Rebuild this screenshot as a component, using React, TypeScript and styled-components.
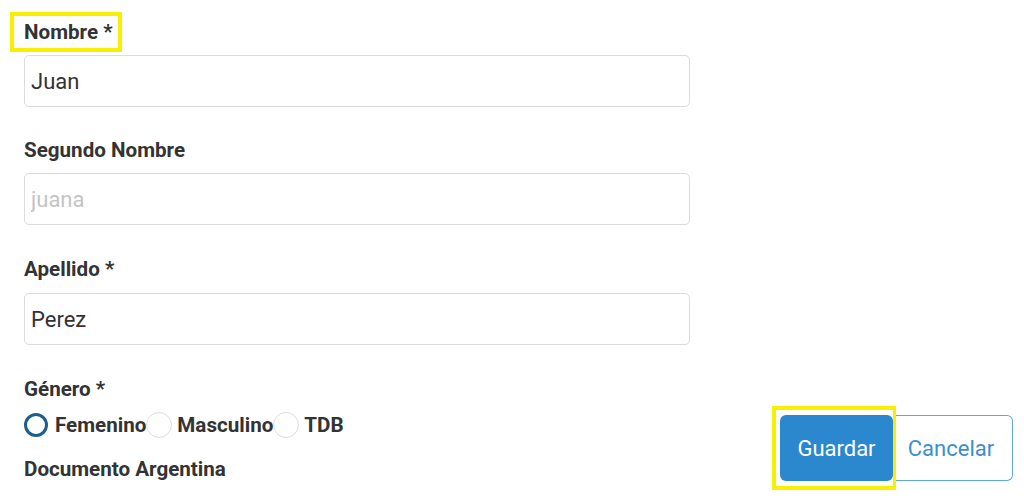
import styled, { createGlobalStyle } from 'styled-components';

const highlight = '#f7f000';
const ink = '#333333';
const blue = '#2b88cf';

const GlobalStyle = createGlobalStyle`
  html, body {
    margin: 0;
    padding: 0;
    background: #ffffff;
    font-family: Roboto, "Noto Sans", "Liberation Sans", sans-serif;
    color: ${ink};
  }
`;

const fields = [
  { label: 'Nombre *', value: 'Juan', placeholder: '', marked: true },
  { label: 'Segundo Nombre', value: '', placeholder: 'juana', marked: false },
  { label: 'Apellido *', value: 'Perez', placeholder: '', marked: false },
];

const genders = ['Femenino', 'Masculino', 'TDB'];

export default function App() {
  return (
    <>
      <GlobalStyle />
      <Form>
        {fields.map((f) => (
          <Field key={f.label}>
            <Label $marked={f.marked}>{f.label}</Label>
            <Input defaultValue={f.value} placeholder={f.placeholder} />
          </Field>
        ))}
        <Label>Género *</Label>
        <RadioRow>
          {genders.map((g, i) => (
            <RadioOption key={g}>
              <RadioCircle $checked={i === 0} />
              {g}
            </RadioOption>
          ))}
        </RadioRow>
        <Label>Documento Argentina</Label>
      </Form>
      <Actions>
        <Marked>
          <PrimaryButton>Guardar</PrimaryButton>
        </Marked>
        <OutlineButton>Cancelar</OutlineButton>
      </Actions>
    </>
  );
}

const Form = styled.div`
  display: flex;
  flex-direction: column;
  width: 666px;
  padding: 20px 0 0 24px;
`;

const Field = styled.div`
  display: flex;
  flex-direction: column;
  gap: 11px;
  margin-bottom: 32px;

  &:first-child {
    margin-bottom: 31px;
  }

  &:nth-child(3) {
    gap: 12px;
  }
`;

const Label = styled.span<{ $marked?: boolean }>`
  align-self: flex-start;
  font-size: 20.6px;
  line-height: 24px;
  font-weight: 700;
  color: ${ink};
  ${(p) =>
    p.$marked &&
    `
    margin: -8px 0 -8px -14px;
    padding: 4px 5px 4px 10px;
    border: 4px solid ${highlight};
  `}
`;

const Input = styled.input`
  box-sizing: border-box;
  width: 100%;
  height: 52px;
  padding: 0 6px;
  border: 1px solid #dcdcdc;
  border-radius: 5px;
  font-family: inherit;
  font-size: 22px;
  color: ${ink};
  outline: none;

  &::placeholder {
    color: #c4c4c4;
  }
`;

const RadioRow = styled.div`
  display: flex;
  align-items: center;
  margin: 11px 0 19px;
`;

const RadioOption = styled.label`
  display: flex;
  align-items: center;
  font-size: 20.6px;
  line-height: 26px;
  font-weight: 700;
  color: ${ink};
`;

const RadioCircle = styled.span<{ $checked: boolean }>`
  box-sizing: border-box;
  display: inline-block;
  width: ${(p) => (p.$checked ? '24px' : '26px')};
  height: ${(p) => (p.$checked ? '24px' : '26px')};
  border-radius: 50%;
  border: ${(p) => (p.$checked ? '3px solid #1f5d8c' : '1px solid #dddddd')};
  margin-right: ${(p) => (p.$checked ? '7px' : '5px')};
`;

const Actions = styled.div`
  position: fixed;
  right: 11px;
  bottom: 9px;
  display: flex;
  align-items: center;
`;

const Marked = styled.div`
  display: flex;
  padding: 5px 0 5px 4px;
  border: 4px solid ${highlight};
  border-right-width: 3px;
`;

const PrimaryButton = styled.button`
  width: 113px;
  height: 66px;
  border: none;
  border-radius: 6px;
  background: ${blue};
  color: #ffffff;
  font-family: inherit;
  font-size: 22px;
  cursor: pointer;
`;

const OutlineButton = styled.button`
  width: 117px;
  height: 66px;
  padding: 0 6px 0 0;
  border: 1px solid #5ea6dc;
  border-left: none;
  border-radius: 0 6px 6px 0;
  background: #ffffff;
  color: #3a8fd0;
  font-family: inherit;
  font-size: 22px;
  cursor: pointer;
`;
